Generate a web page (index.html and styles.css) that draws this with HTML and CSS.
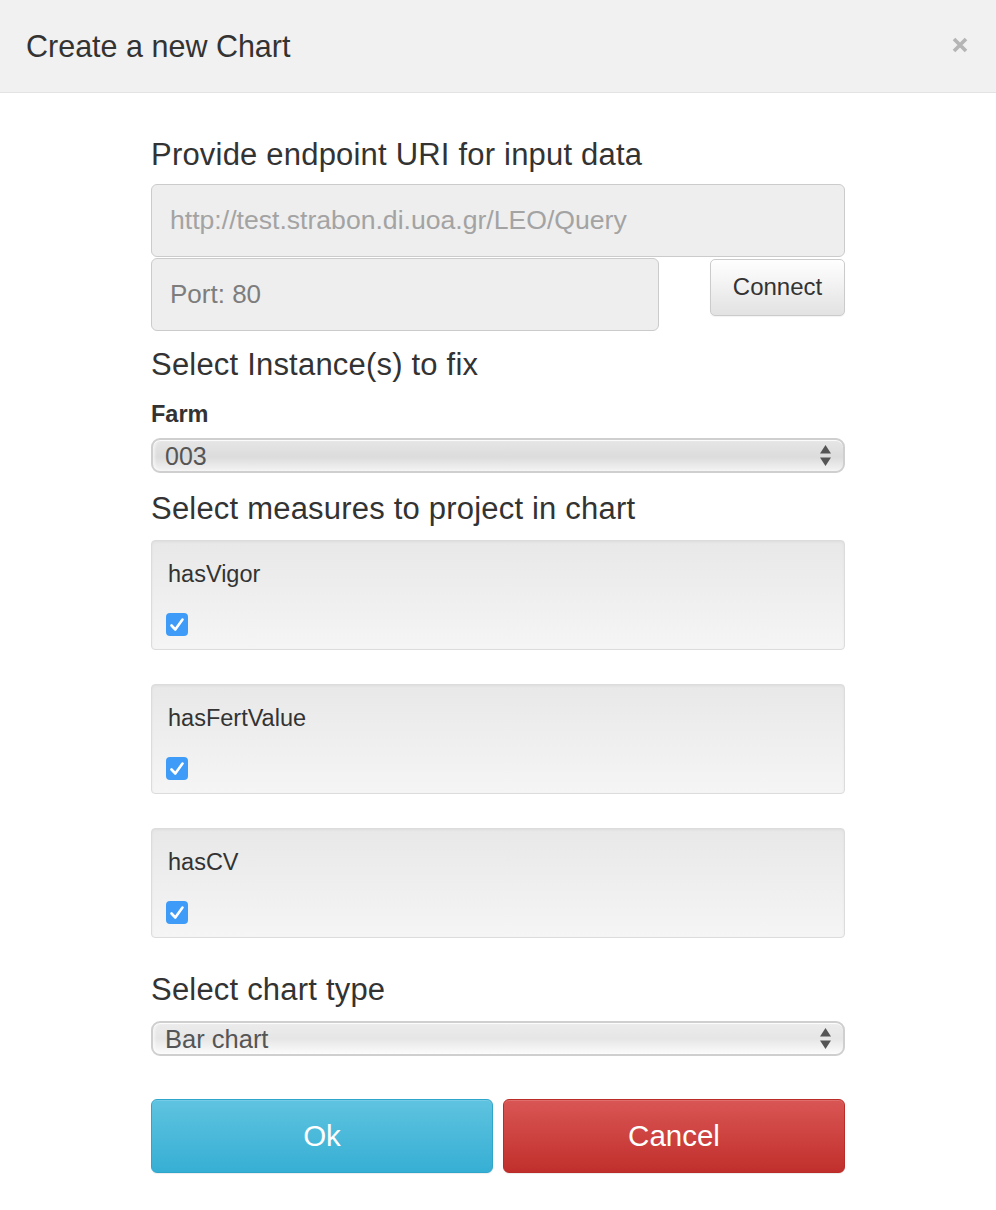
FILE: index.html
```html
<!DOCTYPE html>
<html lang="en">
<head>
<meta charset="utf-8">
<title>Create a new Chart</title>
<link rel="stylesheet" href="styles.css">
</head>
<body>
<div class="modal">
  <header class="modal-header">
    <h1 class="modal-title">Create a new Chart</h1>
    <span class="close" aria-label="Close">
      <svg width="16" height="16" viewBox="0 0 16 16"><path d="M2 2 L14 14 M14 2 L2 14" stroke="#b5b5b5" stroke-width="3.6" stroke-linecap="butt"/></svg>
    </span>
  </header>
  <main class="modal-body">
    <h2 class="heading h-first">Provide endpoint URI for input data</h2>
    <div class="field field-url"><span class="placeholder">http://test.strabon.di.uoa.gr/LEO/Query</span></div>
    <div class="port-row">
      <div class="field field-port"><span class="port-text">Port: 80</span></div>
      <button class="btn-connect" type="button">Connect</button>
    </div>

    <h2 class="heading h-instances">Select Instance(s) to fix</h2>
    <div class="label">Farm</div>
    <div class="select select-farm">
      <span class="select-value">003</span>
      <svg class="arrows" width="11" height="22" viewBox="0 0 11 22"><polygon points="0,8.5 5.5,0 11,8.5" fill="#555"/><polygon points="0,12.5 11,12.5 5.5,21" fill="#555"/></svg>
    </div>

    <h2 class="heading h-measures">Select measures to project in chart</h2>
    <div class="well well-first">
      <div class="well-label">hasVigor</div>
      <span class="checkbox"><svg width="22" height="23" viewBox="0 0 22 23"><path d="M5.5 12.5 L9.3 16.5 L16.5 6.5" fill="none" stroke="#fff" stroke-width="2.6" stroke-linecap="round" stroke-linejoin="round"/></svg></span>
    </div>
    <div class="well">
      <div class="well-label">hasFertValue</div>
      <span class="checkbox"><svg width="22" height="23" viewBox="0 0 22 23"><path d="M5.5 12.5 L9.3 16.5 L16.5 6.5" fill="none" stroke="#fff" stroke-width="2.6" stroke-linecap="round" stroke-linejoin="round"/></svg></span>
    </div>
    <div class="well">
      <div class="well-label">hasCV</div>
      <span class="checkbox"><svg width="22" height="23" viewBox="0 0 22 23"><path d="M5.5 12.5 L9.3 16.5 L16.5 6.5" fill="none" stroke="#fff" stroke-width="2.6" stroke-linecap="round" stroke-linejoin="round"/></svg></span>
    </div>

    <h2 class="heading h-type">Select chart type</h2>
    <div class="select select-type">
      <span class="select-value">Bar chart</span>
      <svg class="arrows" width="11" height="22" viewBox="0 0 11 22"><polygon points="0,8.5 5.5,0 11,8.5" fill="#555"/><polygon points="0,12.5 11,12.5 5.5,21" fill="#555"/></svg>
    </div>

    <div class="actions">
      <button class="btn btn-ok" type="button">Ok</button>
      <button class="btn btn-cancel" type="button">Cancel</button>
    </div>
  </main>
</div>
</body>
</html>
```
FILE: styles.css
```css
html, body {
  margin: 0;
  padding: 0;
  background: #fff;
}
body {
  font-family: "Liberation Sans", Arial, Helvetica, sans-serif;
  color: #333;
  width: 996px;
  min-height: 1210px;
}
.modal-header {
  height: 92px;
  background: #f1f1f1;
  border-bottom: 1px solid #e3e3e3;
  display: flex;
  align-items: center;
  justify-content: space-between;
  padding: 0 28px 0 26px;
}
.modal-title {
  margin: 0;
  font-size: 30.5px;
  line-height: 34px;
  font-weight: normal;
  color: #333;
}
.close {
  display: flex;
  width: 16px;
  height: 16px;
  margin-top: -2px;
}
.modal-body {
  padding: 45px 151px 40px;
  display: flex;
  flex-direction: column;
}
.heading {
  margin: 0;
  font-size: 31px;
  line-height: 34px;
  letter-spacing: 0.2px;
  font-weight: normal;
  color: #333;
}
.h-instances { margin-top: 17px; }
.h-measures { margin-top: 19px; }
.h-type { margin-top: 35px; }

.field {
  box-sizing: border-box;
  background: #eeeeee;
  border: 1px solid #cbcbcb;
  border-radius: 6px;
  display: flex;
  align-items: center;
  padding: 0 18px;
  font-size: 26px;
}
.field-url {
  margin-top: 12px;
  height: 73px;
}
.placeholder { color: #a3a3a3; font-size: 26.6px; }
.port-row {
  margin-top: 1px;
  display: flex;
  justify-content: space-between;
  align-items: flex-start;
}
.field-port {
  width: 508px;
  height: 73px;
}
.port-text { color: #7d7d7d; }
.btn-connect {
  box-sizing: border-box;
  margin-top: 1px;
  width: 135px;
  height: 57px;
  border: 1px solid #cbcbcb;
  border-radius: 5px;
  background: linear-gradient(to bottom, #ffffff 0%, #e2e2e2 100%);
  font-family: inherit;
  font-size: 24px;
  color: #333;
  padding: 0 0 2px 0;
  box-shadow: 0 1px 1px rgba(0,0,0,0.05);
}
.label {
  margin-top: 19px;
  font-size: 23.5px;
  line-height: 26px;
  font-weight: bold;
  color: #333;
}
.select {
  box-sizing: border-box;
  height: 35px;
  border: 2px solid #cfcfcf;
  border-radius: 9px;
  display: flex;
  align-items: center;
  justify-content: space-between;
  padding: 0 12px 0 12px;
  font-size: 25.5px;
  color: #555;
  box-shadow: inset 0 1px 0 rgba(255,255,255,0.8), inset 2px 0 3px rgba(255,255,255,0.6);
}
.select-farm {
  margin-top: 11px;
  background: linear-gradient(to bottom, #e6e6e6 0%, #dcdcdc 55%, #f3f3f3 100%);
}
.select-farm .select-value { font-size: 25px; }
.select-type {
  margin-top: 14px;
  background: linear-gradient(to bottom, #ececec 0%, #e6e6e6 50%, #fbfbfb 100%);
}
.select-value { line-height: 30px; }
.arrows { display: block; margin-top: 1px; }

.well {
  box-sizing: border-box;
  height: 110px;
  margin-top: 34px;
  padding: 20px 16px 0 16px;
  border: 1px solid #dcdcdc;
  border-radius: 4px;
  background: linear-gradient(to bottom, #e8e8e8 0%, #f5f5f5 100%);
  box-shadow: inset 0 1px 3px rgba(0,0,0,0.05);
}
.well-first { margin-top: 14px; }
.well-label {
  font-size: 23.5px;
  line-height: 26px;
  color: #333;
}
.checkbox {
  display: block;
  margin-top: 26px;
  margin-left: -2px;
  width: 22px;
  height: 23px;
  border-radius: 4px;
  background: #3f9bf8;
}
.checkbox svg { display: block; }

.actions {
  margin-top: 43px;
  display: flex;
  gap: 10px;
}
.btn {
  flex: 1;
  box-sizing: border-box;
  height: 74px;
  border-radius: 6px;
  font-family: inherit;
  font-size: 29.5px;
  color: #fff;
  padding: 0;
  box-shadow: inset 0 1px 0 rgba(255,255,255,0.15), 0 1px 1px rgba(0,0,0,0.075);
}
.btn-ok {
  background: linear-gradient(to bottom, #5fc3e0 0%, #36afd4 100%);
  border: 1px solid #2ea6cb;
}
.btn-cancel {
  background: linear-gradient(to bottom, #d95654 0%, #c12f2c 100%);
  border: 1px solid #b92c28;
}
```
